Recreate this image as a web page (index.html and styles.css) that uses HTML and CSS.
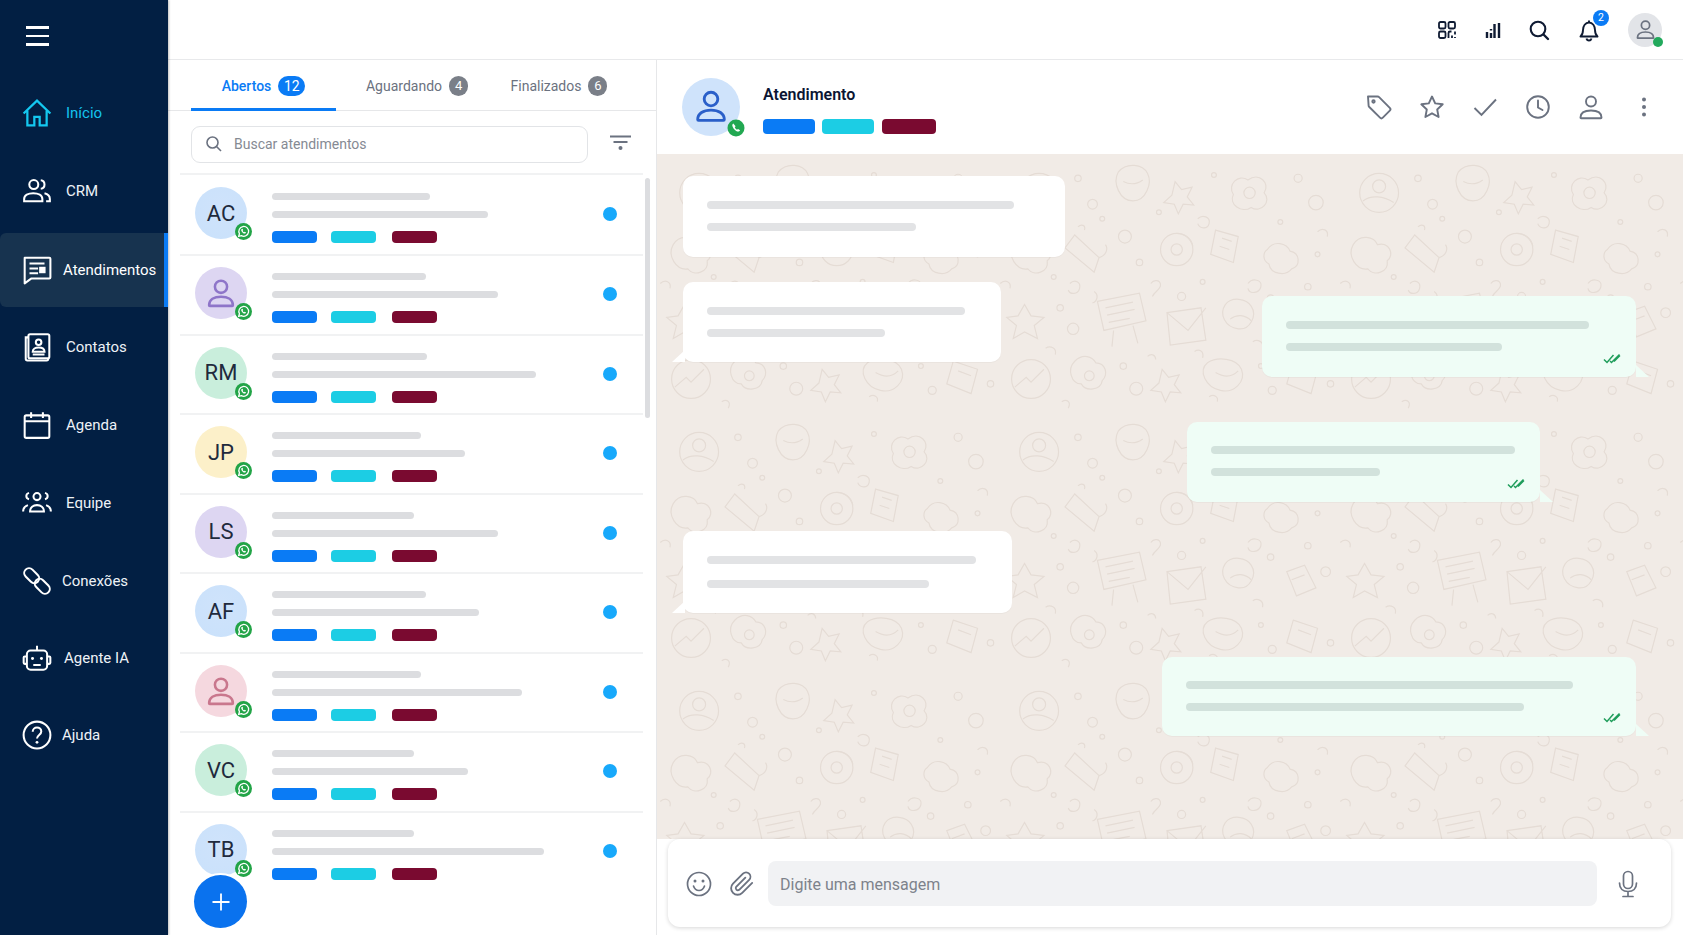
FILE: index.html
```html
<!DOCTYPE html>
<html lang="pt-BR">
<head>
  <meta charset="UTF-8" />
  <meta name="viewport" content="width=device-width, initial-scale=1.0" />
  <title>Atendimentos</title>
  <link rel="stylesheet" href="styles.css">
</head>
<body>
  <svg class="sprites" aria-hidden="true">
    <symbol id="wa" viewBox="0 0 16 16">
      <circle cx="8" cy="8" r="8" fill="#22a447"/>
      <path d="M3.4 12.7l.8-2.6a4.6 4.6 0 1 1 1.8 1.8z" fill="none" stroke="#fff" stroke-width="1.2" stroke-linejoin="round"/>
      <path d="M6.3 5.6c-.6.5-.6 1.3 0 2.3.7 1.2 1.7 1.9 2.7 2 .7.1 1.2-.3 1.4-.9l-1.3-.8-.6.5c-.6-.2-1.1-.8-1.3-1.4l.5-.6-.7-1.3z" fill="#fff"/>
    </symbol>
    <symbol id="person" viewBox="0 0 24 24">
      <circle cx="12" cy="7.6" r="4.3" fill="none" stroke="currentColor" stroke-width="1.8"/>
      <path d="M3.6 20.6c0-3.9 3.6-6 8.4-6s8.4 2.1 8.4 6c0 .3-.2.5-.5.5H4.1c-.3 0-.5-.2-.5-.5z" fill="none" stroke="currentColor" stroke-width="1.8" stroke-linejoin="round"/>
    </symbol>
    <symbol id="ticks" viewBox="0 0 18 11">
      <path d="M1 6.500l3 3L10.500 2M7 8l1.500 1.500L16.500 1.500M11 8.500L17 2.500" fill="none" stroke="#1f9d5b" stroke-width="1.500"/>
    </symbol>
  </svg>

  <aside class="sidebar">
    <button class="menu-btn" aria-label="Menu"><span></span><span></span><span></span></button>
    <nav class="nav">
      <a class="nav-item nav-home">
        <svg class="nav-icon" viewBox="0 0 28 28"><path d="M1.5 14.5L14 2.5l12.5 12M5 12v13.500h6.500v-8h5v8H23V12"/></svg>
        <span>Início</span>
      </a>
      <a class="nav-item">
        <svg class="nav-icon" viewBox="0 0 28 28"><circle cx="11" cy="8" r="4.200"/><path d="M2 23.500v-2c0-3.500 3.800-5.500 8.500-5.500s8.500 2 8.500 5.500v2zM17.500 4c2 .2 3.500 1.900 3.500 4s-1.500 3.800-3.500 4M21 16.200c2.900.7 5 2.500 5 5.300v2h-3.500"/></svg>
        <span>CRM</span>
      </a>
      <a class="nav-item nav-active">
        <svg class="nav-icon" viewBox="0 0 28 28"><path d="M2.500 2.500h23c.6 0 1 .4 1 1v17.500c0 .6-.4 1-1 1H8.500l-6 4.500z" stroke-linejoin="round"/><path d="M7 8h14M7 12.500h8M7 17h8"/><rect class="nav-fill" x="16" y="11" width="6" height="6"/></svg>
        <span>Atendimentos</span>
      </a>
      <a class="nav-item">
        <svg class="nav-icon" viewBox="0 0 28 28"><rect x="6" y="2" width="19.500" height="22.500" rx="1.500"/><path d="M6 5H3.500v20c0 .8.700 1.500 1.500 1.500h18c.8 0 1.500-.7 1.500-1.500v-.5"/><circle cx="15.500" cy="9.500" r="2.600"/><path d="M10 18.500c0-2.600 2.500-4 5.500-4s5.500 1.400 5.500 4zM10 21h11"/></svg>
        <span>Contatos</span>
      </a>
      <a class="nav-item">
        <svg class="nav-icon" viewBox="0 0 28 28"><rect x="2.500" y="5" width="23" height="21" rx="1.500"/><path d="M2.500 10.500h23M8.500 2v5.500M19.500 2v5.500"/></svg>
        <span>Agenda</span>
      </a>
      <a class="nav-item">
        <svg class="nav-icon" viewBox="0 0 30 28"><circle cx="15" cy="8" r="3.300"/><path d="M8.500 22c0-3.700 2.900-6 6.500-6s6.500 2.300 6.500 6zM7.500 4.500C5.800 5 5 6.300 5 7.500s.8 2.500 2.500 3M22.500 4.500c1.700.5 2.500 1.800 2.500 3s-.8 2.500-2.500 3M2 22c0-3 1.500-5 4.500-6M28 22c0-3-1.500-5-4.500-6"/></svg>
        <span>Equipe</span>
      </a>
      <a class="nav-item nav-tight">
        <svg class="nav-icon" viewBox="0 0 28 28"><g transform="rotate(-45 14 14)"><rect x="9.500" y="-1" width="9" height="16" rx="4.500"/><rect x="9.500" y="13" width="9" height="16" rx="4.500"/></g></svg>
        <span>Conexões</span>
      </a>
      <a class="nav-item nav-mid">
        <svg class="nav-icon" viewBox="0 0 30 28"><rect x="5.500" y="7" width="19" height="18" rx="3.500"/><path d="M15 7V2.500M5.500 12.500H3.500c-.6 0-1 .4-1 1v5c0 .6.400 1 1 1h2M24.500 12.500h2c.6 0 1 .4 1 1v5c0 .6-.4 1-1 1h-2M11.500 20.500h7"/><circle class="nav-fill" cx="10.800" cy="14.500" r="1.400"/><circle class="nav-fill" cx="19.200" cy="14.500" r="1.400"/></svg>
        <span>Agente IA</span>
      </a>
      <a class="nav-item nav-tight">
        <svg class="nav-icon" viewBox="0 0 28 28"><circle cx="14" cy="14" r="12.500"/><path d="M10 11c0-2.500 1.800-4 4-4s4 1.500 4 3.700c0 3.300-4 3.300-4 6.600"/><circle class="nav-fill" cx="14" cy="20.800" r="1.300"/></svg>
        <span>Ajuda</span>
      </a>
    </nav>
  </aside>

  <div class="main">
    <header class="topbar">
      <svg class="top-icon" viewBox="0 0 24 24"><rect x="4" y="4" width="6.500" height="6.500" rx="1.500"/><rect x="13.500" y="4" width="6.500" height="6.500" rx="1.500"/><rect x="4" y="13.500" width="6.500" height="6.500" rx="1.500"/><path d="M13.500 20v-5c0-.8.700-1.500 1.500-1.500h1.500M20 13.500v3M17 17.500V20M20 19v1"/></svg>
      <svg class="top-icon" viewBox="0 0 24 24"><path d="M6 20v-6M10 20v-5M13.500 20V6M18 20V5" stroke-width="2.400"/><path d="M10 12.500v-1.500" stroke-width="2.400"/></svg>
      <svg class="top-icon" viewBox="0 0 24 24"><circle cx="11" cy="11" r="7.300" stroke-width="2.100"/><path d="M16.500 16.500L21 21" stroke-width="2.400" stroke-linecap="round"/></svg>
      <div class="bell">
        <svg class="top-icon" viewBox="0 0 24 24"><path d="M3.500 18.500c1.800-1.600 2.500-3 2.500-6.500 0-4 2.400-7.500 6-7.500s6 3.500 6 7.500c0 3.500.7 4.900 2.500 6.500z" stroke-width="1.900" stroke-linejoin="round"/><path d="M12 4.500V2.500M9.500 20.500c.3 1.200 1.200 2 2.500 2s2.200-.8 2.500-2" stroke-width="1.900"/></svg>
        <span class="bell-count">2</span>
      </div>
      <div class="me">
        <svg class="me-icon"><use href="#person"/></svg>
        <span class="online"></span>
      </div>
    </header>

    <div class="content">
      <section class="panel">
        <div class="tabs">
          <div class="tab tab-open">Abertos <span class="count count-open">12</span></div>
          <div class="tab tab-wait">Aguardando <span class="count">4</span></div>
          <div class="tab tab-done">Finalizados <span class="count">6</span></div>
        </div>
        <div class="search-row">
          <div class="search">
            <svg class="search-icon" viewBox="0 0 18 18"><circle cx="7.500" cy="7.500" r="5.500"/><path d="M11.500 11.500L16 16"/></svg>
            <span>Buscar atendimentos</span>
          </div>
          <svg class="filter" viewBox="0 0 21 16"><path d="M0 1.500h21M3.500 7h14"/><circle cx="10.500" cy="13" r="2"/></svg>
        </div>
        <div class="list">
          <div class="row">
            <div class="avatar av-blue">AC<svg class="wa"><use href="#wa"/></svg></div>
            <div class="row-body">
              <div class="bar" style="width:158px"></div>
              <div class="bar" style="width:216px"></div>
              <div class="tags"><i class="tag t-blue"></i><i class="tag t-cyan"></i><i class="tag t-wine"></i></div>
            </div>
            <span class="dot"></span>
          </div>
          <div class="row">
            <div class="avatar av-purple"><svg class="av-person"><use href="#person"/></svg><svg class="wa"><use href="#wa"/></svg></div>
            <div class="row-body">
              <div class="bar" style="width:154px"></div>
              <div class="bar" style="width:226px"></div>
              <div class="tags"><i class="tag t-blue"></i><i class="tag t-cyan"></i><i class="tag t-wine"></i></div>
            </div>
            <span class="dot"></span>
          </div>
          <div class="row">
            <div class="avatar av-green">RM<svg class="wa"><use href="#wa"/></svg></div>
            <div class="row-body">
              <div class="bar" style="width:155px"></div>
              <div class="bar" style="width:264px"></div>
              <div class="tags"><i class="tag t-blue"></i><i class="tag t-cyan"></i><i class="tag t-wine"></i></div>
            </div>
            <span class="dot"></span>
          </div>
          <div class="row">
            <div class="avatar av-yellow">JP<svg class="wa"><use href="#wa"/></svg></div>
            <div class="row-body">
              <div class="bar" style="width:149px"></div>
              <div class="bar" style="width:193px"></div>
              <div class="tags"><i class="tag t-blue"></i><i class="tag t-cyan"></i><i class="tag t-wine"></i></div>
            </div>
            <span class="dot"></span>
          </div>
          <div class="row">
            <div class="avatar av-lilac">LS<svg class="wa"><use href="#wa"/></svg></div>
            <div class="row-body">
              <div class="bar" style="width:142px"></div>
              <div class="bar" style="width:226px"></div>
              <div class="tags"><i class="tag t-blue"></i><i class="tag t-cyan"></i><i class="tag t-wine"></i></div>
            </div>
            <span class="dot"></span>
          </div>
          <div class="row">
            <div class="avatar av-blue">AF<svg class="wa"><use href="#wa"/></svg></div>
            <div class="row-body">
              <div class="bar" style="width:154px"></div>
              <div class="bar" style="width:207px"></div>
              <div class="tags"><i class="tag t-blue"></i><i class="tag t-cyan"></i><i class="tag t-wine"></i></div>
            </div>
            <span class="dot"></span>
          </div>
          <div class="row">
            <div class="avatar av-pink"><svg class="av-person"><use href="#person"/></svg><svg class="wa"><use href="#wa"/></svg></div>
            <div class="row-body">
              <div class="bar" style="width:149px"></div>
              <div class="bar" style="width:250px"></div>
              <div class="tags"><i class="tag t-blue"></i><i class="tag t-cyan"></i><i class="tag t-wine"></i></div>
            </div>
            <span class="dot"></span>
          </div>
          <div class="row">
            <div class="avatar av-green">VC<svg class="wa"><use href="#wa"/></svg></div>
            <div class="row-body">
              <div class="bar" style="width:142px"></div>
              <div class="bar" style="width:196px"></div>
              <div class="tags"><i class="tag t-blue"></i><i class="tag t-cyan"></i><i class="tag t-wine"></i></div>
            </div>
            <span class="dot"></span>
          </div>
          <div class="row">
            <div class="avatar av-blue">TB<svg class="wa"><use href="#wa"/></svg></div>
            <div class="row-body">
              <div class="bar" style="width:142px"></div>
              <div class="bar" style="width:272px"></div>
              <div class="tags"><i class="tag t-blue"></i><i class="tag t-cyan"></i><i class="tag t-wine"></i></div>
            </div>
            <span class="dot"></span>
          </div>
        </div>
        <div class="scrollbar"></div>
        <button class="fab" aria-label="Novo atendimento"><svg viewBox="0 0 20 20"><path d="M10 1.500v17M1.500 10h17"/></svg></button>
      </section>

      <section class="chat">
        <div class="chat-head">
          <div class="chat-avatar">
            <svg class="chat-person"><use href="#person"/></svg>
            <svg class="chat-badge" viewBox="0 0 18 18"><circle cx="9" cy="9" r="8.500" fill="#22a852"/><path d="M6.300 4.600c-1.200.7-1.300 2-.4 3.700 1 2 2.500 3.500 4.200 4.100 1.300.5 2.400 0 3-1.100L11 9.900l-1 .8c-.9-.5-1.800-1.500-2.200-2.500l.8-1z" fill="#fff"/></svg>
          </div>
          <div class="chat-info">
            <div class="chat-title">Atendimento</div>
            <div class="tags chat-tags"><i class="tag t-blue"></i><i class="tag t-cyan"></i><i class="tag t-wine"></i></div>
          </div>
          <div class="actions">
            <svg viewBox="0 0 28 28"><path d="M3 3.500h9.500c.6 0 1.200.2 1.600.7l10.700 10.700c.8.800.8 2 0 2.800l-7 7c-.8.800-2 .8-2.800 0L4.300 14c-.4-.4-.7-1-.7-1.600z" stroke-linejoin="round"/><circle cx="8.500" cy="8.500" r="1.200"/></svg>
            <svg viewBox="0 0 28 28"><path d="M14 3.500l3.200 6.900 7.500.9-5.500 5.200 1.400 7.500-6.600-3.700L7.400 24l1.400-7.500-5.500-5.200 7.500-.9z" stroke-linejoin="round"/></svg>
            <svg viewBox="0 0 28 28"><path d="M3.500 15l7 7L25 6.500"/></svg>
            <svg viewBox="0 0 28 28"><circle cx="14" cy="14" r="10.800"/><path d="M14 7.500v7l4.500 2.500" stroke-linecap="round"/></svg>
            <svg viewBox="0 0 28 28"><circle cx="14" cy="8.500" r="5"/><path d="M3.500 24.500c0-4.800 4.300-7 10.500-7s10.500 2.200 10.500 7c0 .4-.3.700-.7.700H4.200c-.4 0-.7-.3-.7-.7z" stroke-linejoin="round"/></svg>
            <svg class="more" viewBox="0 0 28 28"><circle cx="14" cy="6.500" r="2"/><circle cx="14" cy="14" r="2"/><circle cx="14" cy="21.500" r="2"/></svg>
          </div>
        </div>

        <div class="messages">
          <div class="msg-col msg-col-in">
            <div class="bubble in in-1">
              <div class="line" style="width:307px"></div>
              <div class="line" style="width:209px"></div>
            </div>
            <div class="bubble in in-2 tail">
              <div class="line" style="width:258px"></div>
              <div class="line" style="width:178px"></div>
            </div>
            <div class="bubble in in-3 tail">
              <div class="line" style="width:269px"></div>
              <div class="line" style="width:222px"></div>
            </div>
          </div>
          <div class="msg-col msg-col-out">
            <div class="bubble out out-1 tail">
              <div class="line" style="width:303px"></div>
              <div class="line" style="width:216px"></div>
              <svg class="ticks"><use href="#ticks"/></svg>
            </div>
            <div class="bubble out out-2 tail">
              <div class="line" style="width:304px"></div>
              <div class="line" style="width:169px"></div>
              <svg class="ticks"><use href="#ticks"/></svg>
            </div>
            <div class="bubble out out-3 tail">
              <div class="line" style="width:387px"></div>
              <div class="line" style="width:338px"></div>
              <svg class="ticks"><use href="#ticks"/></svg>
            </div>
          </div>
        </div>

        <div class="composer-wrap">
          <div class="composer">
            <svg class="comp-icon" viewBox="0 0 26 26"><circle cx="13" cy="13" r="11.500"/><path d="M7.500 15c1 3 3 4.500 5.500 4.500s4.500-1.500 5.500-4.500" stroke-linecap="round"/><circle class="comp-fill" cx="9" cy="10" r="1.500"/><circle class="comp-fill" cx="17" cy="10" r="1.500"/></svg>
            <svg class="comp-icon" viewBox="0 0 24 24"><path d="M21.400 11l-9.200 9.200a6 6 0 0 1-8.500-8.500l9.200-9.200a4 4 0 0 1 5.700 5.700l-9.200 9.200a2 2 0 0 1-2.800-2.800l8.500-8.500" stroke-linecap="round" stroke-linejoin="round"/></svg>
            <div class="msg-input">Digite uma mensagem</div>
            <svg class="comp-icon mic" viewBox="0 0 28 28"><rect x="9.500" y="1.500" width="9" height="17" rx="4.500"/><path d="M5.500 13c0 5.500 3.500 8.500 8.500 8.500s8.500-3 8.500-8.500M14 21.500v4.500M9 26.500h10" stroke-linecap="round"/></svg>
          </div>
        </div>
      </section>
    </div>
  </div>
</body>
</html>
```

FILE: styles.css
```css
* {
  box-sizing: border-box;
}

html,
body {
  height: 100%;
}

body {
  margin: 0;
  display: flex;
  overflow: hidden;
  font-family: Roboto, "Liberation Sans", sans-serif;
  background-color: #fff;
  color: #1f2a3d;
}

.sprites {
  display: none;
}

/* sidebar */
.sidebar {
  width: 168px;
  flex-shrink: 0;
  background-color: #021f43;
  box-shadow: 1px 0 2px rgba(0, 0, 0, 0.25);
  position: relative;
  z-index: 2;
}

.menu-btn {
  display: flex;
  flex-direction: column;
  gap: 6px;
  width: 23px;
  margin: 26px 0 0 26px;
  padding: 0;
  border: none;
  background: none;
}

.menu-btn span {
  display: block;
  height: 2.500px;
  background-color: #fff;
}

.nav {
  display: flex;
  flex-direction: column;
  gap: 4px;
  margin-top: 30px;
}

.nav-item {
  display: flex;
  align-items: center;
  gap: 13px;
  height: 74px;
  padding-left: 21px;
  font-size: 15px;
  color: #eef2f7;
}

.nav-icon {
  width: 32px;
  height: 30px;
  flex-shrink: 0;
  fill: none;
  stroke: #fff;
  stroke-width: 1.900;
}

.nav-fill {
  fill: #fff;
  stroke: none;
}

.nav-home {
  color: #14c3ee;
}

.nav-home .nav-icon {
  stroke: #14c8f0;
  stroke-width: 2.100;
}

.nav-active {
  gap: 10px;
  margin: 1px 0 -1px;
  background-color: #17334f;
  border-right: 4px solid #0a7bf5;
  border-radius: 6px 0 0 6px;
  color: #fff;
}

.nav-tight {
  gap: 9px;
}

.nav-mid {
  gap: 11px;
  margin-top: -1px;
}

.nav-mid + .nav-tight {
  margin-top: -1px;
}

/* top */
.main {
  flex: 1;
  min-width: 0;
  display: flex;
  flex-direction: column;
}

.topbar {
  height: 60px;
  flex-shrink: 0;
  display: flex;
  align-items: center;
  justify-content: flex-end;
  gap: 22px;
  padding-right: 21px;
  border-bottom: 1px solid #e8e9eb;
}

.top-icon {
  display: block;
  width: 24px;
  height: 24px;
  fill: none;
  stroke: #0f1b33;
  stroke-width: 1.800;
}

.bell {
  position: relative;
  margin-left: 4px;
}

.bell-count {
  position: absolute;
  top: -8px;
  left: 16px;
  width: 16px;
  height: 16px;
  border-radius: 50%;
  background-color: #0a7bf5;
  color: #fff;
  font-size: 10.500px;
  line-height: 16px;
  text-align: center;
}

.me {
  position: relative;
  width: 34px;
  height: 34px;
  margin-left: 5px;
  display: flex;
  align-items: center;
  justify-content: center;
  border-radius: 50%;
  background-color: #e2e4e8;
  color: #6b7280;
}

.me-icon {
  width: 23px;
  height: 23px;
}

.online {
  position: absolute;
  right: -1px;
  bottom: 0;
  width: 10px;
  height: 10px;
  border-radius: 50%;
  background-color: #22a95c;
}

.content {
  flex: 1;
  min-height: 0;
  display: flex;
}

/* list panel */
.panel {
  position: relative;
  width: 489px;
  flex-shrink: 0;
  overflow: hidden;
  border-right: 1px solid #e6e7e9;
}

.tabs {
  display: flex;
  height: 51px;
  padding-left: 23px;
  border-bottom: 1px solid #e6e7e9;
}

.tab {
  display: flex;
  align-items: center;
  justify-content: center;
  gap: 7px;
  height: 51px;
  font-size: 14px;
  color: #6b7280;
}

.tab-open {
  width: 145px;
  padding-top: 3px;
  border-bottom: 3px solid #0a7bf5;
  color: #0a7bf5;
  font-weight: 500;
}

.tab-wait {
  width: 162px;
}

.tab-done {
  width: 122px;
}

.count {
  min-width: 19px;
  height: 20px;
  padding: 0 4px;
  border-radius: 10px;
  background-color: #7a7f88;
  color: #fff;
  font-size: 13px;
  font-weight: 400;
  line-height: 20px;
  text-align: center;
}

.count-open {
  min-width: 27px;
  background-color: #0a7bf5;
  font-size: 14px;
}

.search-row {
  display: flex;
  align-items: center;
  gap: 22px;
  height: 62px;
  padding-left: 23px;
}

.search {
  display: flex;
  align-items: center;
  gap: 11px;
  width: 397px;
  height: 37px;
  margin-top: 4px;
  padding-left: 13px;
  border: 1px solid #e2e4e7;
  border-radius: 9px;
  font-size: 14px;
  color: #858a93;
}

.search-icon {
  width: 18px;
  height: 18px;
  fill: none;
  stroke: #6b7280;
  stroke-width: 1.600;
}

.filter {
  width: 21px;
  height: 16px;
  margin-top: 2px;
  fill: #6b7280;
  stroke: #6b7280;
  stroke-width: 1.800;
}

.filter circle {
  stroke: none;
}

.list {
  margin: 0 13px 0 12px;
  border-top: 2px solid #f1f2f3;
}

.row {
  display: flex;
  height: 79.550px;
  padding: 11px 26px 0 15px;
  border-bottom: 2px solid #f1f2f3;
}

.row:first-child {
  height: 81px;
  padding-top: 12px;
}

.row:last-child {
  border-bottom: none;
}

.avatar {
  position: relative;
  width: 52px;
  height: 52px;
  flex-shrink: 0;
  display: flex;
  align-items: center;
  justify-content: center;
  border-radius: 50%;
  font-size: 22px;
}

.av-blue {
  background: radial-gradient(circle at 50% 40%, #cfe3fb, #c9e1fb);
}

.av-purple {
  background-color: #ddd6f2;
  color: #8e75c9;
}

.av-lilac {
  background-color: #ddd6f2;
}

.av-green {
  background-color: #c9eedc;
}

.av-yellow {
  background-color: #fcf0c9;
}

.av-pink {
  background-color: #f5d8df;
  color: #c9778d;
}

.av-person {
  width: 34px;
  height: 34px;
}

.wa {
  position: absolute;
  right: -5px;
  bottom: -1px;
  width: 17px;
  height: 17px;
}

.row-body {
  flex: 1;
  margin-left: 25px;
  padding-top: 6px;
}

.bar {
  height: 7px;
  margin-bottom: 11px;
  border-radius: 4px;
  background-color: #dcdde0;
}

.tags {
  display: flex;
  margin-top: 13px;
}

.bar + .bar {
  margin-bottom: 0;
}

.tag {
  display: block;
  width: 45px;
  height: 12px;
  border-radius: 4px;
}

.t-blue {
  background-color: #0a7bf5;
}

.t-cyan {
  margin-left: 14px;
  background-color: #1ccde4;
}

.t-wine {
  margin-left: 16px;
  background-color: #7a0a30;
}

.dot {
  width: 14px;
  height: 14px;
  margin-top: 20px;
  border-radius: 50%;
  background-color: #18a9fb;
}

.scrollbar {
  position: absolute;
  top: 118px;
  left: 477px;
  width: 5px;
  height: 240px;
  border-radius: 3px;
  background-color: #dcdde0;
}

.fab {
  position: absolute;
  left: 26px;
  top: 815px;
  width: 53px;
  height: 53px;
  display: flex;
  align-items: center;
  justify-content: center;
  padding: 0;
  border: none;
  border-radius: 50%;
  background-color: #0a72ee;
  box-shadow: 0 0 0 2px #fff;
}

.fab svg {
  width: 20px;
  height: 20px;
  fill: none;
  stroke: #fff;
  stroke-width: 1.800;
}

/* chat */
.chat {
  flex: 1;
  min-width: 0;
  display: flex;
  flex-direction: column;
}

.chat-head {
  height: 94px;
  flex-shrink: 0;
  display: flex;
  align-items: center;
  padding: 0 25px 0 25px;
}

.chat-avatar {
  position: relative;
  width: 58px;
  height: 58px;
  display: flex;
  align-items: center;
  justify-content: center;
  border-radius: 50%;
  background-color: #cfe3fb;
  color: #2a5fc9;
}

.chat-person {
  width: 38px;
  height: 38px;
  margin-top: -3px;
}

.chat-badge {
  position: absolute;
  right: -5px;
  bottom: -1px;
  width: 18px;
  height: 18px;
}

.chat-info {
  margin: 4px 0 0 23px;
}

.chat-title {
  font-size: 16px;
  font-weight: 600;
  color: #0b1533;
}

.chat-tags {
  margin-top: 15px;
}

.chat-tags .tag {
  width: 52px;
  height: 15px;
}

.chat-tags .t-cyan {
  margin-left: 7px;
}

.chat-tags .t-wine {
  margin-left: 8px;
  width: 54px;
}

.actions {
  display: flex;
  gap: 25px;
  margin-left: auto;
}

.actions svg {
  width: 28px;
  height: 28px;
  fill: none;
  stroke: #6b7280;
  stroke-width: 1.900;
}

.actions .more {
  fill: #6b7280;
  stroke: none;
}

.messages {
  flex: 1;
  min-height: 0;
  display: flex;
  justify-content: space-between;
  padding: 0 47px 0 26px;
  background-color: #f1ebe6;
  background-size: 340px 259px;
  background-image: url("data:image/svg+xml;utf8,<svg xmlns='http://www.w3.org/2000/svg' viewBox='0 0 420 320' fill='none' stroke='%23e5dcd5' stroke-width='1.500'><circle cx='52' cy='48' r='24'/><circle cx='52' cy='40' r='8'/><path d='M32 58c10-8 26-6 38 2'/><circle cx='100' cy='30' r='4'/><circle cx='118' cy='62' r='6'/><path d='M150 22c10-12 30-10 36 2s-2 34-18 34-26-22-18-36zM156 34c8 4 16 4 24-2'/><path d='M220 34l8 10 13-3-6 12 8 10-13-1-6 12-5-12-13-2 10-9z'/><circle cx='268' cy='26' r='3'/><path d='M292 50c-8-12 6-26 18-18 14-10 28 4 20 16 10 10-4 26-16 18-12 8-28-4-22-16z'/><circle cx='312' cy='48' r='7'/><circle cx='372' cy='30' r='5'/><circle cx='394' cy='60' r='9'/><path d='M20 112c8-14 26-10 30 0 14-4 22 12 12 20 2 14-16 20-24 10-14 2-26-16-18-30z'/><path d='M96 100l30 28-6 18-36-30z'/><path d='M126 128c8-2 12-10 8-16'/><circle cx='158' cy='102' r='8'/><circle cx='176' cy='134' r='4'/><circle cx='222' cy='118' r='20'/><circle cx='222' cy='118' r='7'/><path d='M222 98c10 0 18 6 20 16'/><path d='M270 94l28 8-6 32-28-10z'/><path d='M278 104l12 4M275 114l12 4'/><path d='M334 118c8-12 24-8 28 2 12 2 14 18 2 22-8 10-26 6-28-6-8-4-8-14-2-18z'/><circle cx='396' cy='124' r='3'/><path d='M26 200l8-14 8 14 16 2-12 10 4 16-16-8-14 8 4-16-12-10z'/><circle cx='78' cy='190' r='4'/><circle cx='94' cy='216' r='7'/><path d='M124 182l52-10 8 34-52 12zM134 190l34-7M136 199l34-7M138 208l26-5'/><path d='M144 218l-2 20M168 212l6 22'/><path d='M210 196l42-6 6 40-44 6zM210 196l26 22 22-28'/><circle cx='228' cy='176' r='5'/><path d='M282 186c8-10 26-8 32 2 8 12-2 30-16 28-16-2-24-18-16-30z'/><path d='M288 204c8-6 18-6 26 2'/><circle cx='338' cy='178' r='4'/><path d='M358 196l22-8 14 28-24 10z'/><path d='M364 206l16-6'/><circle cx='406' cy='196' r='6'/><circle cx='42' cy='278' r='24'/><path d='M22 288l14-12 6 6 16-16'/><path d='M96 256c10-10 22-6 26 2 12 0 16 14 8 22-2 12-20 14-26 4-12 0-18-18-8-28z'/><circle cx='114' cy='274' r='6'/><circle cx='156' cy='262' r='4'/><circle cx='172' cy='290' r='8'/><path d='M204 266l8 10 13-3-6 12 8 10-13-1-6 12-5-12-13-2 10-9z'/><path d='M260 258c12-8 36-6 42 8 6 16-10 30-26 26-18-4-28-24-16-34zM270 270c10 6 20 6 28-2'/><circle cx='326' cy='262' r='3'/><circle cx='340' cy='292' r='5'/><path d='M366 256l30 10-8 30-30-12zM372 268l16 6'/><circle cx='412' cy='284' r='4'/><circle cx='70' cy='152' r='3'/><circle cx='200' cy='72' r='3'/><circle cx='254' cy='158' r='3'/><circle cx='384' cy='164' r='4'/><circle cx='130' cy='80' r='3'/><circle cx='350' cy='84' r='3'/><path d='M90 160c6-6 14-2 12 6s-12 8-14 2M120 170c6 4 4 12-2 14M190 160c4-6 12-4 12 2s-8 8-10 14M248 80c6-6 16-2 14 6s-12 6-14 0M310 160c6-8 18-4 16 4s-14 10-16 2M60 240c6-4 14 0 12 8M186 250c4-4 10-2 10 4M244 244c6-4 12 0 10 8M316 232c6-4 14 0 12 8M4 160c6-6 14-2 12 6M396 96c6-6 14-2 12 6M100 90c4-4 10-2 8 4M262 300c6-4 12 0 10 6M80 306c6-4 12 0 8 8'/></svg>");
}

.msg-col {
  display: flex;
  flex-direction: column;
  align-items: flex-end;
}

.msg-col-in {
  padding-top: 22px;
  align-items: flex-start;
}

.msg-col-out {
  padding-top: 142px;
}

.bubble {
  position: relative;
  padding: 25px 24px 0;
  border-radius: 10px;
  box-shadow: 0 1px 1px rgba(0, 0, 0, 0.03);
}

.line {
  height: 8px;
  border-radius: 4px;
}

.line + .line {
  margin-top: 14px;
}

.in {
  background-color: #fff;
}

.in .line {
  background-color: #e2e3e5;
}

.out {
  background-color: #effdf6;
}

.out .line {
  background-color: #d2e2dc;
}

.in-1 {
  width: 382px;
  height: 81px;
}

.in-2 {
  width: 318px;
  height: 80px;
  margin-top: 25px;
}

.in-3 {
  width: 329px;
  height: 82px;
  margin-top: 169px;
}

.in-3 .line + .line {
  margin-top: 16px;
}

.out-1 {
  width: 374px;
  height: 81px;
}

.out-2 {
  width: 353px;
  height: 80px;
  margin-top: 45px;
  margin-right: 96px;
  padding-top: 24px;
}

.out-3 {
  width: 474px;
  height: 79px;
  margin-top: 155px;
  padding-top: 24px;
}

.tail::after {
  content: "";
  position: absolute;
  bottom: 0;
  width: 13px;
  height: 12px;
}

.in.tail::after {
  left: -11px;
  background-color: #fff;
  clip-path: polygon(100% 0, 100% 100%, 0 100%);
}

.out.tail::after {
  right: -13px;
  background-color: #effdf6;
  clip-path: polygon(0 0, 100% 100%, 0 100%);
}

.ticks {
  position: absolute;
  right: 15px;
  bottom: 13px;
  width: 18px;
  height: 11px;
}

/* composer */
.composer-wrap {
  height: 96px;
  flex-shrink: 0;
  padding: 0 12px 8px 11px;
  background-color: #fff;
}

.composer {
  display: flex;
  align-items: center;
  height: 88px;
  padding: 0 29px 0 18px;
  border-radius: 12px;
  background-color: #fff;
  box-shadow: 0 1px 4px rgba(0, 0, 0, 0.16);
}

.comp-icon {
  width: 26px;
  height: 26px;
  margin-top: 2px;
  flex-shrink: 0;
  fill: none;
  stroke: #6b7280;
  stroke-width: 1.700;
}

.comp-icon + .comp-icon {
  margin-left: 17px;
}

.comp-fill {
  fill: #6b7280;
  stroke: none;
}

.msg-input {
  flex: 1;
  height: 45px;
  margin: 0 17px 0 13px;
  padding-left: 12px;
  border-radius: 8px;
  background-color: #f1f2f4;
  color: #7d828b;
  font-size: 16px;
  line-height: 47px;
}

.mic {
  width: 28px;
  height: 28px;
}
```
